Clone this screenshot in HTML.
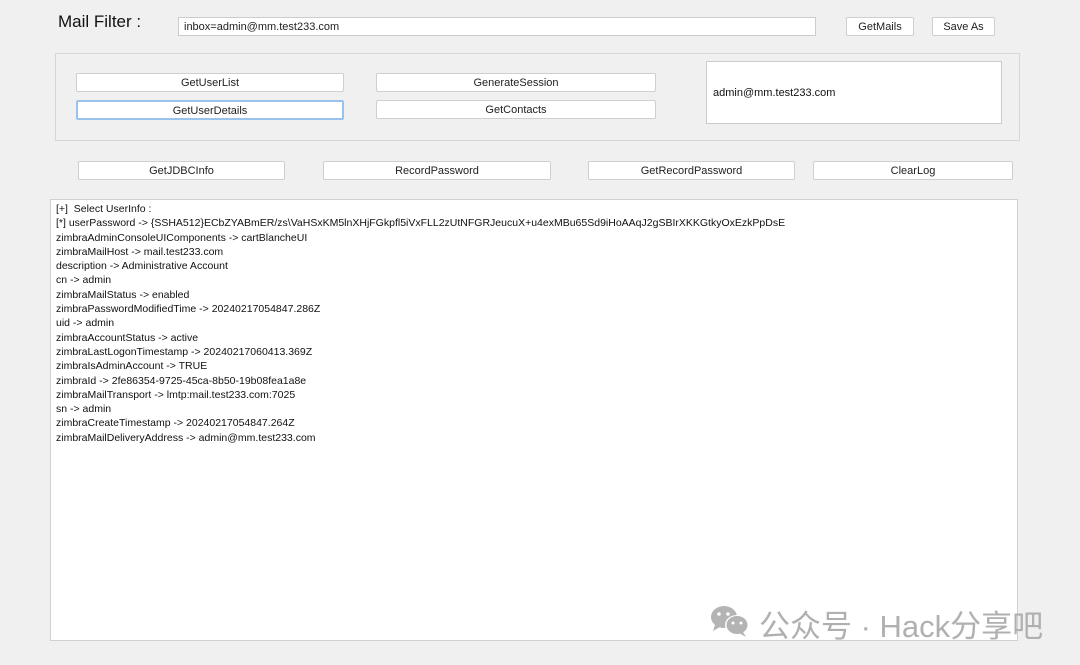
<!DOCTYPE html>
<html><head><meta charset="utf-8"><style>
body{margin:0;width:1080px;height:665px;background:#f0f0f0;font-family:"Liberation Sans","Noto Sans CJK SC",sans-serif;position:relative;overflow:hidden}
.a{position:absolute;box-sizing:border-box}
.btn{background:#fff;border:1px solid #cfcfcf;border-radius:2px;font-size:11px;color:#222;text-align:center;line-height:19px}
.log{left:50px;top:199px;width:968px;height:442px;background:#fff;border:1px solid #d0d0d0;font-size:10.5px;line-height:14.3px;color:#111;padding:2px 0 0 5px;white-space:pre}
</style></head><body>
<div class="a" style="left:58px;top:12px;font-size:17px;color:#111">Mail Filter :</div>
<div class="a" style="left:178px;top:17px;width:638px;height:19px;background:#fff;border:1px solid #ccc;font-size:11px;line-height:19px;padding-left:5px;color:#222">inbox=admin@mm.test233.com</div>
<div class="a btn" style="left:846px;top:17px;width:68px;height:19px">GetMails</div>
<div class="a btn" style="left:932px;top:17px;width:63px;height:19px">Save As</div>
<div class="a" style="left:55px;top:53px;width:965px;height:88px;border:1px solid #d6d6d6"></div>
<div class="a btn" style="left:76px;top:73px;width:268px;height:19px">GetUserList</div>
<div class="a btn" style="left:76px;top:100px;width:268px;height:20px;border:2px solid #99c2ef;line-height:18px">GetUserDetails</div>
<div class="a btn" style="left:376px;top:73px;width:280px;height:19px">GenerateSession</div>
<div class="a btn" style="left:376px;top:100px;width:280px;height:19px">GetContacts</div>
<div class="a" style="left:706px;top:61px;width:296px;height:63px;background:#fff;border:1px solid #ccc;font-size:11px;padding:25px 0 0 6px;color:#111">admin@mm.test233.com</div>
<div class="a btn" style="left:78px;top:161px;width:207px;height:19px">GetJDBCInfo</div>
<div class="a btn" style="left:323px;top:161px;width:228px;height:19px">RecordPassword</div>
<div class="a btn" style="left:588px;top:161px;width:207px;height:19px">GetRecordPassword</div>
<div class="a btn" style="left:813px;top:161px;width:200px;height:19px">ClearLog</div>
<div class="a log">[+]  Select UserInfo :
[*] userPassword -> {SSHA512}ECbZYABmER/zs\VaHSxKM5lnXHjFGkpfl5iVxFLL2zUtNFGRJeucuX+u4exMBu65Sd9iHoAAqJ2gSBIrXKKGtkyOxEzkPpDsE
zimbraAdminConsoleUIComponents -> cartBlancheUI
zimbraMailHost -> mail.test233.com
description -> Administrative Account
cn -> admin
zimbraMailStatus -> enabled
zimbraPasswordModifiedTime -> 20240217054847.286Z
uid -> admin
zimbraAccountStatus -> active
zimbraLastLogonTimestamp -> 20240217060413.369Z
zimbraIsAdminAccount -> TRUE
zimbraId -> 2fe86354-9725-45ca-8b50-19b08fea1a8e
zimbraMailTransport -> lmtp:mail.test233.com:7025
sn -> admin
zimbraCreateTimestamp -> 20240217054847.264Z
zimbraMailDeliveryAddress -> admin@mm.test233.com</div>
<svg class="a" style="left:709px;top:604px" width="42" height="34" viewBox="0 0 42 34"><ellipse cx="15" cy="13" rx="13" ry="11" fill="#b4b4b4"/><path d="M6 21 L4 27 L11 23Z" fill="#b4b4b4"/><ellipse cx="28" cy="21" rx="12" ry="10" fill="#fff"/><ellipse cx="28" cy="21" rx="10.5" ry="9" fill="#b4b4b4"/><path d="M34 28 L37 33 L30 29Z" fill="#b4b4b4"/><circle cx="10" cy="10" r="1.8" fill="#fff"/><circle cx="19" cy="10" r="1.8" fill="#fff"/><circle cx="24" cy="19" r="1.5" fill="#fff"/><circle cx="32" cy="19" r="1.5" fill="#fff"/></svg>
<div class="a" style="left:759px;top:601px;font-size:31px;color:#b0b0b0;white-space:nowrap">公众号 · Hack分享吧</div>
</body></html>
